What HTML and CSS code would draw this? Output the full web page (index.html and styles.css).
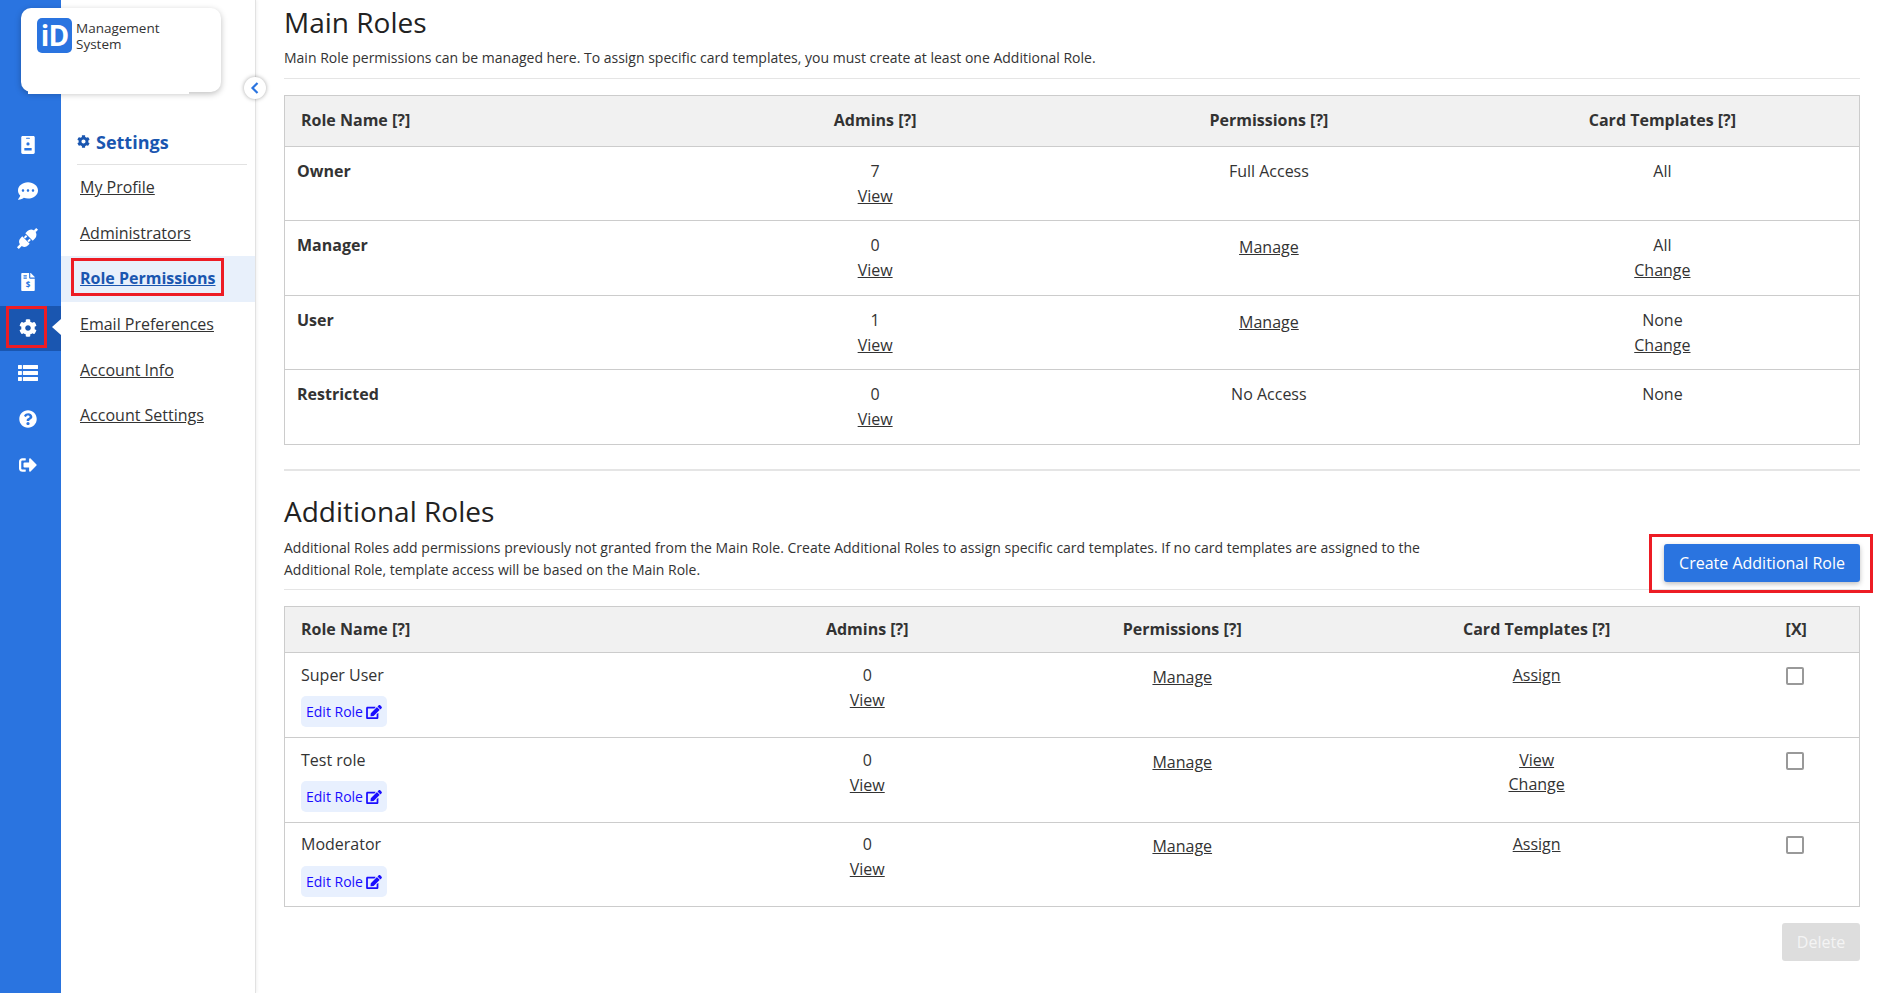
FILE: index.html
```html
<!DOCTYPE html>
<html lang="en">
<head>
<meta charset="utf-8">
<title>Role Permissions</title>
<link rel="stylesheet" href="styles.css">
</head>
<body>
<svg class="defs" aria-hidden="true">
  <symbol id="i-cog" viewBox="0 0 512 512"><path d="M487.4 315.7l-42.6-24.6c4.3-23.2 4.3-47 0-70.2l42.6-24.6c4.9-2.8 7.1-8.6 5.5-14-11.1-35.6-30-67.8-54.7-94.6-3.8-4.1-10-5.1-14.8-2.3L380.8 110c-17.9-15.4-38.5-27.3-60.8-35.1V25.8c0-5.6-3.9-10.5-9.4-11.7-36.7-8.2-74.3-7.8-109.2 0-5.5 1.2-9.4 6.1-9.4 11.7V75c-22.2 7.9-42.8 19.8-60.8 35.1L88.7 85.5c-4.9-2.8-11-1.9-14.8 2.3-24.7 26.7-43.6 58.9-54.7 94.6-1.7 5.4.6 11.2 5.5 14L67.3 221c-4.3 23.2-4.3 47 0 70.2l-42.6 24.6c-4.9 2.8-7.1 8.6-5.5 14 11.1 35.6 30 67.8 54.7 94.6 3.8 4.1 10 5.1 14.8 2.3l42.6-24.6c17.9 15.4 38.5 27.3 60.8 35.1v49.2c0 5.6 3.9 10.5 9.4 11.7 36.7 8.2 74.3 7.8 109.2 0 5.5-1.2 9.4-6.1 9.4-11.7v-49.2c22.2-7.9 42.8-19.8 60.8-35.1l42.6 24.6c4.9 2.8 11 1.9 14.8-2.3 24.7-26.7 43.6-58.9 54.7-94.6 1.5-5.5-.7-11.3-5.6-14.1zM256 336c-44.1 0-80-35.9-80-80s35.9-80 80-80 80 35.9 80 80-35.9 80-80 80z"/></symbol>
  <symbol id="i-edit" viewBox="0 0 576 512"><path d="M402.6 83.2l90.2 90.2c3.8 3.8 3.8 10 0 13.8L274.4 405.6l-92.8 10.3c-12.4 1.4-22.9-9.1-21.5-21.5l10.3-92.8L388.8 83.2c3.8-3.8 10-3.8 13.8 0zm162-22.9l-48.8-48.8c-15.2-15.2-39.9-15.2-55.2 0l-35.4 35.4c-3.8 3.8-3.8 10 0 13.8l90.2 90.2c3.8 3.8 10 3.8 13.8 0l35.4-35.4c15.2-15.3 15.2-40 0-55.2zM384 346.2V448H64V128h229.8c3.2 0 6.2-1.3 8.5-3.5l40-40c7.6-7.6 2.2-20.5-8.5-20.5H48C21.5 64 0 85.5 0 112v352c0 26.5 21.5 48 48 48h352c26.5 0 48-21.500 48-48V306.2c0-10.7-12.9-16-20.5-8.5l-40 40c-2.2 2.3-3.5 5.3-3.5 8.5z"/></symbol>
</svg>

<aside class="rail">
  <a class="rail-item"><svg class="ri" viewBox="0 0 384 512"><path fill-rule="evenodd" d="M40 0h304c22 0 40 18 40 40v432c0 22-18 40-40 40H40c-22 0-40-18-40-40V40C0 18 18 0 40 0zm112 48c-9 0-16 7-16 16s7 16 16 16h80c9 0 16-7 16-16s-7-16-16-16zm40 130a46 46 0 1 0 0 92 46 46 0 0 0 0-92zM88 340v72h208v-72z"/></svg></a>
  <a class="rail-item"><svg class="ri ri-wide" viewBox="0 0 512 512"><path d="M256 32C114.6 32 0 125.1 0 240c0 49.6 21.4 95 57 130.7C44.5 421.1 2.7 466 2.2 466.5c-2.2 2.3-2.8 5.7-1.5 8.7S4.8 480 8 480c66.3 0 116-31.800 140.6-51.4 32.7 12.3 69 19.4 107.4 19.4 141.4 0 256-93.1 256-208S397.4 32 256 32zM128 272c-17.7 0-32-14.3-32-32s14.3-32 32-32 32 14.3 32 32-14.3 32-32 32zm128 0c-17.700 0-32-14.3-32-32s14.3-32 32-32 32 14.3 32 32-14.3 32-32 32zm128 0c-17.7 0-32-14.3-32-32s14.3-32 32-32 32 14.3 32 32-14.3 32-32 32z"/></svg></a>
  <a class="rail-item"><svg class="ri ri-plug" viewBox="0 0 24 24"><g transform="rotate(45 12 12)"><path d="M10.500-3.500h3V0h-3zM6 9.500V6a6 6 0 0 1 12 0v3.500zM8 10.500h2.200V14H8zM13.800 10.500H16V14h-2.200zM6 14.500h12V17a6 6 0 0 1-4.500 5.800v4.700h-3v-4.700A6 6 0 0 1 6 17z"/></g></svg></a>
  <a class="rail-item"><svg class="ri" viewBox="0 0 384 512"><path d="M224 0H24C10.700 0 0 10.700 0 24v464c0 13.300 10.700 24 24 24h336c13.300 0 24-10.700 24-24V160H248c-13.200 0-24-10.800-24-24zM64 72c0-4.400 3.600-8 8-8h80c4.400 0 8 3.600 8 8v16c0 4.400-3.600 8-8 8H72c-4.400 0-8-3.600-8-8zm0 64c0-4.400 3.600-8 8-8h80c4.400 0 8 3.600 8 8v16c0 4.400-3.600 8-8 8H72c-4.400 0-8-3.600-8-8zM377 105 279 7c-4.500-4.500-10.600-7-17-7h-6v128h128v-6c0-6.300-2.500-12.400-7-17z"/><text x="192" y="420" class="dollar">$</text></svg></a>
  <a class="rail-item is-active"><svg class="ri"><use href="#i-cog"/></svg><span class="outline outline-rail"></span></a>
  <a class="rail-item"><svg class="ri ri-wide" viewBox="0 0 512 512"><path d="M10 51h80a10 10 0 0 1 10 10v80a10 10 0 0 1-10 10H10a10 10 0 0 1-10-10V61a10 10 0 0 1 10-10zM135 51h367a10 10 0 0 1 10 10v80a10 10 0 0 1-10 10H135a10 10 0 0 1-10-10V61a10 10 0 0 1 10-10zM10 206h80a10 10 0 0 1 10 10v80a10 10 0 0 1-10 10H10a10 10 0 0 1-10-10v-80a10 10 0 0 1 10-10zM135 206h367a10 10 0 0 1 10 10v80a10 10 0 0 1-10 10H135a10 10 0 0 1-10-10v-80a10 10 0 0 1 10-10zM10 361h80a10 10 0 0 1 10 10v80a10 10 0 0 1-10 10H10a10 10 0 0 1-10-10v-80a10 10 0 0 1 10-10zM135 361h367a10 10 0 0 1 10 10v80a10 10 0 0 1-10 10H135a10 10 0 0 1-10-10v-80a10 10 0 0 1 10-10z"/></svg></a>
  <a class="rail-item"><svg class="ri" viewBox="0 0 512 512"><path d="M504 256c0 136.997-111.043 248-248 248S8 392.997 8 256C8 119.083 119.043 8 256 8s248 111.083 248 248zM262.655 90c-54.497 0-89.255 22.957-116.549 63.758-3.536 5.286-2.353 12.415 2.715 16.258l34.699 26.31c5.205 3.947 12.621 3.008 16.665-2.122 17.864-22.658 30.113-35.797 57.303-35.797 20.429 0 45.698 13.148 45.698 32.958 0 14.976-12.363 22.667-32.534 33.976C247.128 238.528 216 254.941 216 296v4c0 6.627 5.373 12 12 12h56c6.627 0 12-5.373 12-12v-1.333c0-28.462 83.186-29.647 83.186-106.667 0-58.002-60.165-102-116.531-102zM256 338c-25.365 0-46 20.635-46 46 0 25.364 20.635 46 46 46s46-20.636 46-46c0-25.365-20.635-46-46-46z"/></svg></a>
  <a class="rail-item"><svg class="ri" viewBox="0 0 512 512"><path d="M497 273L329 441c-15 15-41 4.500-41-17v-96H152c-13.300 0-24-10.700-24-24v-96c0-13.300 10.700-24 24-24h136V88c0-21.400 25.900-32 41-17l168 168c9.300 9.400 9.300 24.600 0 34zM192 436v-40c0-6.600-5.400-12-12-12H96c-17.700 0-32-14.300-32-32V160c0-17.700 14.300-32 32-32h84c6.600 0 12-5.400 12-12V76c0-6.600-5.400-12-12-12H96c-53 0-96 43-96 96v192c0 53 43 96 96 96h84c6.600 0 12-5.400 12-12z"/></svg></a>
</aside>

<div class="logo-card">
  <span class="logo-mark">iD</span>
  <span class="logo-text">Management<br>System</span>
</div>
<button class="collapse" type="button" aria-label="Collapse"><svg viewBox="0 0 10 14" class="chev"><path d="M7.500 2 2.500 7l5 5"/></svg></button>

<nav class="subnav">
  <h2 class="subnav-title"><svg class="title-ico"><use href="#i-cog"/></svg>Settings</h2>
  <ul class="subnav-list">
    <li class="subnav-item"><a class="subnav-link">My Profile</a></li>
    <li class="subnav-item"><a class="subnav-link">Administrators</a></li>
    <li class="subnav-item is-current"><a class="subnav-link">Role Permissions</a><span class="outline outline-nav"></span></li>
    <li class="subnav-item"><a class="subnav-link">Email Preferences</a></li>
    <li class="subnav-item"><a class="subnav-link">Account Info</a></li>
    <li class="subnav-item"><a class="subnav-link">Account Settings</a></li>
  </ul>
</nav>

<main class="content">
  <section class="main-roles">
    <h1 class="page-title">Main Roles</h1>
    <p class="lead lead-main">Main Role permissions can be managed here. To assign specific card templates, you must create at least one Additional Role.</p>
    <table class="roles roles-main">
      <thead>
        <tr><th class="first">Role Name [?]</th><th>Admins [?]</th><th>Permissions [?]</th><th>Card Templates [?]</th></tr>
      </thead>
      <tbody>
        <tr><td class="name-strong">Owner</td><td>7<br><a class="tlink">View</a></td><td>Full Access</td><td>All</td></tr>
        <tr><td class="name-strong">Manager</td><td>0<br><a class="tlink">View</a></td><td><a class="tlink tlink-manage">Manage</a></td><td>All<br><a class="tlink">Change</a></td></tr>
        <tr><td class="name-strong">User</td><td>1<br><a class="tlink">View</a></td><td><a class="tlink tlink-manage">Manage</a></td><td>None<br><a class="tlink">Change</a></td></tr>
        <tr><td class="name-strong">Restricted</td><td>0<br><a class="tlink">View</a></td><td>No Access</td><td>None</td></tr>
      </tbody>
    </table>
  </section>
  <section class="add-roles">
    <h1 class="page-title">Additional Roles</h1>
    <div class="add-head">
      <p class="lead lead-add">Additional Roles add permissions previously not granted from the Main Role. Create Additional Roles to assign specific card templates. If no card templates are assigned to the Additional Role, template access will be based on the Main Role.</p>
      <div class="create-wrap"><button class="btn-create" type="button">Create Additional Role</button><span class="outline outline-btn"></span></div>
    </div>
    <table class="roles roles-add">
      <colgroup><col class="c-name"><col class="c-std"><col class="c-std"><col class="c-card"><col class="c-x"></colgroup>
      <thead>
        <tr><th class="first">Role Name [?]</th><th>Admins [?]</th><th>Permissions [?]</th><th>Card Templates [?]</th><th>[X]</th></tr>
      </thead>
      <tbody>
        <tr><td class="first">Super User<br><a class="edit-role">Edit Role <svg class="edit-ico"><use href="#i-edit"/></svg></a></td><td>0<br><a class="tlink">View</a></td><td><a class="tlink tlink-manage">Manage</a></td><td><a class="tlink">Assign</a></td><td><input class="check" type="checkbox"></td></tr>
        <tr><td class="first">Test role<br><a class="edit-role">Edit Role <svg class="edit-ico"><use href="#i-edit"/></svg></a></td><td>0<br><a class="tlink">View</a></td><td><a class="tlink tlink-manage">Manage</a></td><td class="cell-tight"><a class="tlink">View</a><br><a class="tlink">Change</a></td><td><input class="check" type="checkbox"></td></tr>
        <tr><td class="first">Moderator<br><a class="edit-role">Edit Role <svg class="edit-ico"><use href="#i-edit"/></svg></a></td><td>0<br><a class="tlink">View</a></td><td><a class="tlink tlink-manage">Manage</a></td><td><a class="tlink">Assign</a></td><td><input class="check" type="checkbox"></td></tr>
      </tbody>
    </table>
    <div class="actions"><button class="btn-delete" type="button">Delete</button></div>
  </section>
</main>
</body>
</html>
```
FILE: styles.css
```css
* { box-sizing: border-box; }
html, body { height: 100%; }
body {
  margin: 0;
  display: flex;
  height: 993px;
  overflow: hidden;
  background: #fff;
  color: #333;
  font-family: "Open Sans", sans-serif;
  font-size: 16px;
}
.defs { position: absolute; width: 0; height: 0; }
.rail {
  flex: 0 0 61px;
  background: #2a74e0;
  padding-top: 123px;
}
.rail-item {
  position: relative;
  display: flex;
  align-items: center;
  justify-content: center;
  height: 45.7px;
  padding: 0 6px 2px 0;
}
.rail-item.is-active { background: #1a56b0; }
.rail-item.is-active::after {
  content: "";
  position: absolute;
  right: 0;
  top: 13px;
  border: 8px solid transparent;
  border-left: 0;
  border-right: 9px solid #fff;
}
.ri { width: 18px; height: 18px; fill: #fff; display: block; flex: none; }
.ri-wide { width: 20px; height: 20px; }
.ri-plug { width: 21px; height: 21px; margin-top: 5px; overflow: visible; }
.dollar { font: 700 230px "Open Sans", sans-serif; fill: #2a74e0; text-anchor: middle; }

.outline { position: absolute; border: 3px solid #ed1c24; pointer-events: none; }
.outline-rail { left: 6px; top: 0; width: 41px; height: 42px; }
.outline-nav { left: 10px; top: 2px; width: 153px; height: 38px; }
.outline-btn { left: -15px; top: -10px; width: 224px; height: 59px; }

.logo-card {
  position: absolute;
  left: 21px;
  top: 8px;
  width: 200px;
  height: 84px;
  background: #fff;
  border-radius: 10px;
  box-shadow: 0 2px 6px rgba(0, 0, 0, .25);
  display: flex;
  align-items: flex-start;
  padding: 10px 16px;
  gap: 4px;
}
.logo-card::after {
  content: "";
  position: absolute;
  left: 7px;
  bottom: -2px;
  width: 161px;
  height: 4px;
  background: #fff;
}
.logo-mark {
  flex: 0 0 35px;
  height: 35px;
  border-radius: 5px;
  background: #2a74e0;
  color: #fff;
  font: 700 28px/35px "Open Sans", sans-serif;
  text-align: center;
  letter-spacing: -1px;
}
.logo-text { font-size: 13.5px; line-height: 16px; color: #333; padding-top: 2px; }
.collapse {
  position: absolute;
  left: 244px;
  top: 77px;
  width: 22px;
  height: 22px;
  padding: 0;
  border: 0;
  border-radius: 50%;
  background: #fff;
  box-shadow: 0 0 4px rgba(0, 0, 0, .35);
  display: flex;
  align-items: center;
  justify-content: center;
}
.chev { width: 10px; height: 14px; fill: none; stroke: #2a74e0; stroke-width: 2.2; }

.subnav {
  flex: 0 0 195px;
  border-right: 1px solid #e2e2e2;
  box-shadow: 1px 0 3px rgba(0, 0, 0, .06);
  padding-top: 122px;
}
.subnav-title {
  margin: 0 8px 0 16px;
  height: 43px;
  padding-bottom: 3px;
  border-bottom: 1px solid #e2e2e2;
  display: flex;
  align-items: center;
  gap: 6px;
  color: #1a56b0;
  font-size: 18px;
  font-weight: 700;
}
.title-ico { width: 13px; height: 13px; fill: #1a56b0; }
.subnav-list { list-style: none; margin: 0; padding: 0; }
.subnav-item {
  position: relative;
  height: 45.7px;
  display: flex;
  align-items: center;
  padding: 0 0 2px 19px;
}
.subnav-link { color: #333; text-decoration: underline; }
.subnav-item.is-current { background: #e8f0fb; }
.subnav-item.is-current .subnav-link { color: #1a56b0; font-weight: 700; }

.content { flex: 1; min-width: 0; padding: 0 24px 0 28px; }
.page-title { margin: 0; font-size: 28px; font-weight: 400; line-height: 38px; color: #222; }
.main-roles { padding-top: 3px; border-bottom: 2px solid #e5e5e5; padding-bottom: 24px; }
.lead { margin: 0; font-size: 14px; line-height: 22px; }
.lead-main { margin-top: 6px; padding-bottom: 9px; border-bottom: 1px solid #e5e5e5; margin-bottom: 16px; }
.roles { width: 100%; table-layout: fixed; border-collapse: collapse; border: 1px solid #ccc; }
.roles th { background: #f1f1f1; font-weight: 700; color: #333; text-align: center; padding: 0 0 2px; }
.roles td {
  border-top: 1px solid #ccc;
  text-align: center;
  vertical-align: top;
  line-height: 25px;
  padding: 12px 8px 12px;
}
.roles-main tbody tr:nth-child(odd) td { padding-bottom: 11px; }
.roles-main th { height: 51px; }
.roles-add th { height: 46px; }
.roles th.first { text-align: left; padding-left: 16px; }
.roles td.name-strong { text-align: left; font-weight: 700; padding-left: 12px; }
.tlink { color: #333; text-decoration: underline; }
.tlink-manage { display: inline-block; margin-top: 2px; }
.add-roles { padding-top: 21px; }
.add-head {
  display: flex;
  justify-content: space-between;
  align-items: flex-start;
  margin-top: 7px;
  padding-bottom: 8px;
  border-bottom: 1px solid #e5e5e5;
  margin-bottom: 16px;
}
.lead-add { width: 1150px; }
.create-wrap { position: relative; margin-top: 7px; height: 36px; }
.btn-create {
  display: block;
  width: 196px;
  height: 38px;
  border: 0;
  border-radius: 3px;
  background: #2a74e0;
  color: #fff;
  font: 400 16px "Open Sans", sans-serif;
  box-shadow: 0 2px 5px rgba(0, 0, 0, .25);
}
.c-name { width: 27%; }
.c-std { width: 20%; }
.c-card { width: 25%; }
.c-x { width: 8%; }
.roles-add td { padding: 10px 8px 10px; }
.roles-add td.cell-tight { line-height: 24px; }
.roles-add tbody tr:nth-child(3) td { padding-top: 9px; padding-bottom: 9px; }
.roles td.first { text-align: left; padding-left: 16px; }
.edit-role {
  display: flex;
  width: fit-content;
  align-items: center;
  gap: 3px;
  height: 31px;
  margin-top: 8px;
  padding: 0 5px;
  border-radius: 5px;
  background: #e8f0fe;
  color: #1a0dff;
  font-size: 14px;
}
.roles-add tbody tr:nth-child(3) .edit-role { margin-top: 9px; }
.edit-ico { width: 16px; height: 14px; fill: #1a0dff; }
.check {
  appearance: none;
  display: block;
  width: 18px;
  height: 18px;
  margin: 4px 0 0 44px;
  border: 2px solid #999;
  border-radius: 2px;
  background: #fff;
}
.actions { display: flex; justify-content: flex-end; margin-top: 16px; }
.btn-delete {
  width: 78px;
  height: 38px;
  border: 0;
  border-radius: 3px;
  background: #ddd;
  color: #f4f4f4;
  font: 400 16px "Open Sans", sans-serif;
}
```
